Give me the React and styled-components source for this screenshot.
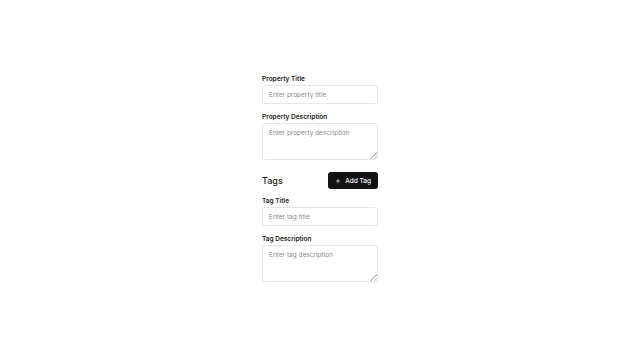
import React from 'react';
import styled, { createGlobalStyle } from 'styled-components';

const GlobalStyle = createGlobalStyle`
  html, body {
    margin: 0;
    padding: 0;
    background: #ffffff;
    font-family: Inter, "Noto Sans", sans-serif;
  }
`;

const Page = styled.div`
  min-height: 100vh;
  display: flex;
  align-items: center;
  justify-content: center;
`;

const Form = styled.form`
  width: 116px;
  display: flex;
  flex-direction: column;
  gap: 9px;
`;

const Field = styled.div`
  display: flex;
  flex-direction: column;
  gap: 2px;
`;

const Label = styled.label`
  font-size: 6.5px;
  line-height: 8px;
  font-weight: 600;
  color: #222;
`;

const Input = styled.input`
  box-sizing: border-box;
  height: 19px;
  width: 100%;
  padding: 0 6px;
  border: 1px solid #e6e6e6;
  border-radius: 3px;
  font-family: inherit;
  font-size: 6.5px;
  color: #222;
  outline: none;
  &::placeholder {
    color: #8a8a8a;
  }
`;

const TextArea = styled.textarea`
  box-sizing: border-box;
  height: 37px;
  width: 100%;
  padding: 5px 6px;
  border: 1px solid #e6e6e6;
  border-radius: 3px;
  font-family: inherit;
  font-size: 6.5px;
  line-height: 9px;
  color: #222;
  outline: none;
  resize: vertical;
  display: block;
  &::placeholder {
    color: #8a8a8a;
  }
  &::-webkit-resizer {
    background: linear-gradient(
      135deg,
      transparent 76%,
      #c8c8c8 76%,
      #c8c8c8 81%,
      transparent 81%,
      transparent 88%,
      #c8c8c8 88%,
      #c8c8c8 93%,
      transparent 93%
    );
  }
`;

const SectionHead = styled.div`
  display: flex;
  align-items: center;
  justify-content: space-between;
  margin-top: 3px;
  margin-bottom: -1px;
`;

const SectionTitle = styled.h3`
  margin: 0;
  font-size: 9px;
  font-weight: 500;
  color: #222;
`;

const AddButton = styled.button`
  display: flex;
  align-items: center;
  gap: 4px;
  height: 17px;
  padding: 0 7px;
  border: none;
  border-radius: 3px;
  background: #121212;
  color: #ffffff;
  font-family: inherit;
  font-size: 6.5px;
  font-weight: 500;
  cursor: pointer;
`;

const PlusIcon = () => (
  <svg width="6" height="6" viewBox="0 0 24 24" fill="none" stroke="currentColor" strokeWidth="2.5" strokeLinecap="round">
    <path d="M12 5v14M5 12h14" />
  </svg>
);

const App = () => {
  return (
    <>
      <GlobalStyle />
      <Page>
        <Form onSubmit={(e) => e.preventDefault()}>
          <Field>
            <Label>Property Title</Label>
            <Input placeholder="Enter property title" />
          </Field>
          <Field>
            <Label>Property Description</Label>
            <TextArea placeholder="Enter property description" />
          </Field>
          <SectionHead>
            <SectionTitle>Tags</SectionTitle>
            <AddButton type="button">
              <PlusIcon />
              Add Tag
            </AddButton>
          </SectionHead>
          <Field>
            <Label>Tag Title</Label>
            <Input placeholder="Enter tag title" />
          </Field>
          <Field>
            <Label>Tag Description</Label>
            <TextArea placeholder="Enter tag description" />
          </Field>
        </Form>
      </Page>
    </>
  );
};

export default App;
